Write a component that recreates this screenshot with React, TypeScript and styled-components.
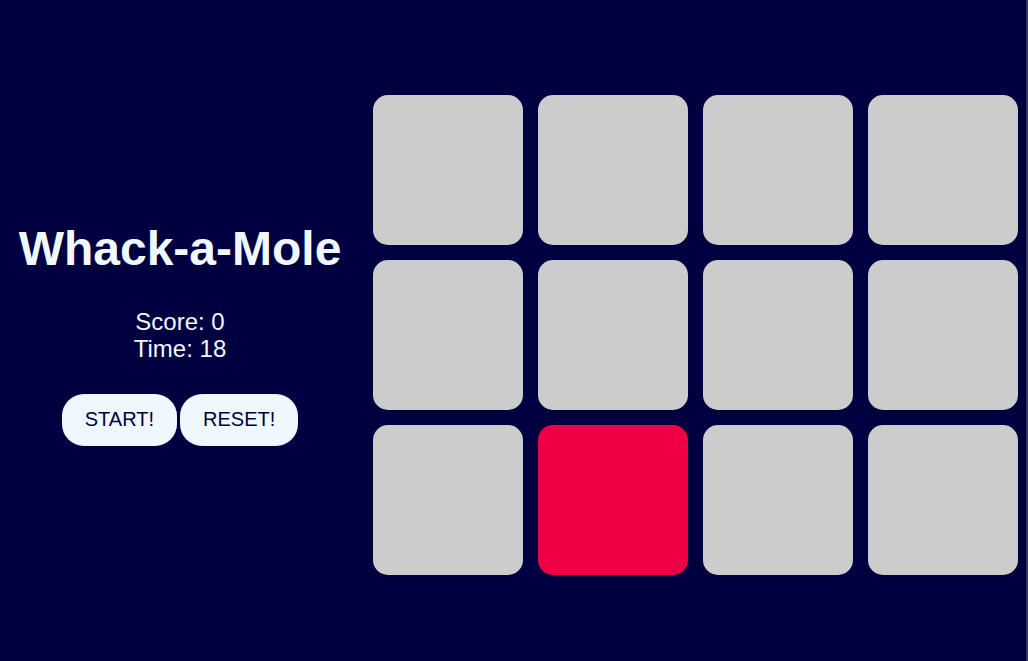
import React, { useState } from "react";
import styled, { createGlobalStyle } from "styled-components";

const GlobalStyle = createGlobalStyle`
  html, body {
    margin: 0;
    padding: 0;
    background: #000040;
  }
  body {
    font-family: "Liberation Sans", Arial, sans-serif;
  }
`;

const Page = styled.div`
  box-sizing: border-box;
  height: 100vh;
  padding-top: 9px;
  display: flex;
  align-items: center;
  gap: 13px;
  background: #000040;
  border-right: 2px solid #36364a;
  overflow: hidden;
`;

const Panel = styled.div`
  width: 360px;
  flex-shrink: 0;
  margin-bottom: 4px;
  display: flex;
  flex-direction: column;
  align-items: center;
  color: #f0f8ff;
`;

const Title = styled.h1`
  margin: 0;
  font-size: 48px;
  font-weight: bold;
  line-height: 55px;
`;

const Stats = styled.div`
  margin-top: 32px;
  font-size: 24px;
  line-height: 27.5px;
  text-align: center;
`;

const Buttons = styled.div`
  margin-top: 31px;
  display: flex;
  gap: 3px;
`;

const Button = styled.button`
  font-family: "Liberation Sans", Arial, sans-serif;
  font-size: 20px;
  line-height: 23px;
  padding: 14.5px 23px;
  border: none;
  border-radius: 22px;
  background: #f0f8ff;
  color: #000040;
  cursor: pointer;
`;

const Board = styled.div`
  display: grid;
  grid-template-columns: repeat(4, 150px);
  grid-auto-rows: 150px;
  gap: 15px;
`;

const Hole = styled.div<{ $up: boolean }>`
  border-radius: 15px;
  background: ${(p) => (p.$up ? "#ef0044" : "#cccccc")};
  cursor: pointer;
`;

export default function App() {
  const [score, setScore] = useState(0);
  const [time] = useState(18);
  const [mole] = useState(9);

  return (
    <>
      <GlobalStyle />
      <Page>
        <Panel>
          <Title>Whack-a-Mole</Title>
          <Stats>
            <div>Score: {score}</div>
            <div>Time: {time}</div>
          </Stats>
          <Buttons>
            <Button>START!</Button>
            <Button onClick={() => setScore(0)}>RESET!</Button>
          </Buttons>
        </Panel>
        <Board>
          {Array.from({ length: 12 }, (_, i) => (
            <Hole
              key={i}
              $up={i === mole}
              onClick={() => i === mole && setScore((s) => s + 1)}
            />
          ))}
        </Board>
      </Page>
    </>
  );
}
